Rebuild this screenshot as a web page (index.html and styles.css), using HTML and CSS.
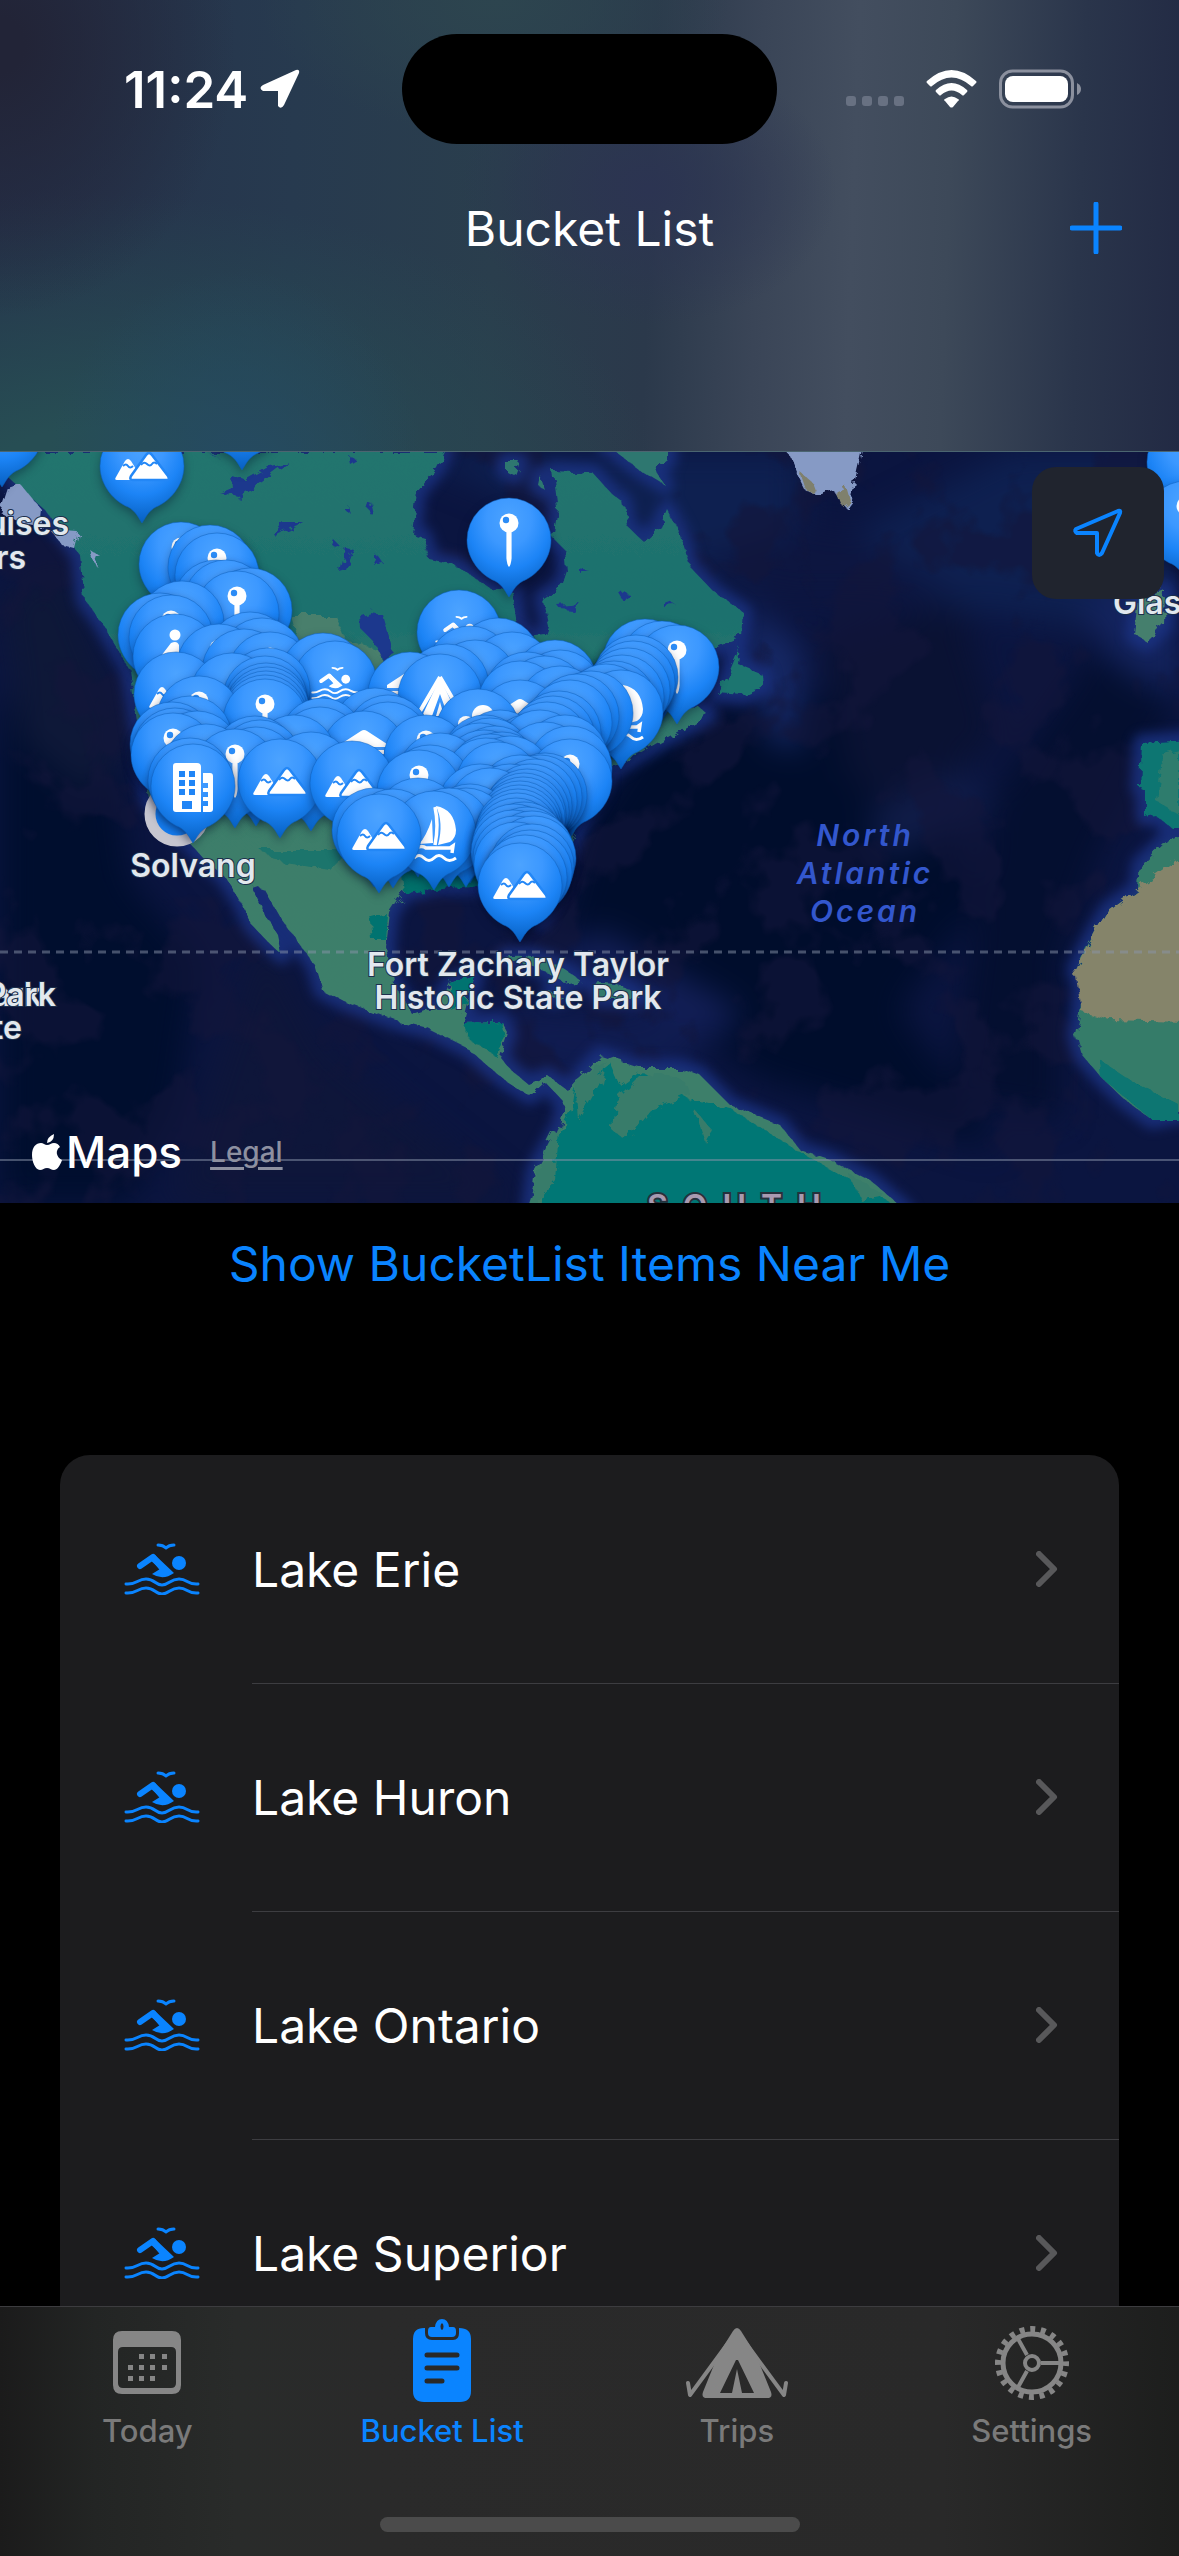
FILE: index.html
```html
<!DOCTYPE html>
<html lang="en">
<head>
    <meta charset="utf-8">
    <title>Bucket List</title>
    <link rel="stylesheet" href="styles.css">
</head>
<body>
    <!-- Shared icons -->
    <svg class="defs" aria-hidden="true">
        <defs>
            <symbol id="swim" viewBox="0 0 76 52">
                <g fill="none" stroke="currentColor" stroke-linecap="round" stroke-linejoin="round">
                    <path d="M34 2C38 2 40 3 42 5C44 3 46 2 50 2" stroke-width="3"/>
                    <path d="M2 41C13 42 13 36 22 36S31 42 38 42S46 36 55 36S63 42 74 41" stroke-width="3"/>
                    <path d="M2 50C13 51 13 45 22 45S31 51 38 51S46 45 55 45S63 51 74 50" stroke-width="3"/>
                    <path d="M16 23L29 14L38 25" stroke-width="6"/>
                </g>
                <path d="M25 16L31 12L50 30Q39 38 28 31L36 26Z" fill="currentColor"/>
                <circle cx="55" cy="20" r="7" fill="currentColor"/>
            </symbol>
        </defs>
    </svg>

    <header class="top">
        <div class="status">
            <div class="status-left">
                <span class="time">11:24</span>
                <svg class="arrow" viewBox="0 0 40 40"><path d="M3 16L36 1Q40 0 39 4L24 36Q21 41 18 37V22H3Q-2 19 3 16Z" fill="#fff"/></svg>
            </div>
            <div class="island"></div>
            <div class="status-right">
                <svg class="dots" viewBox="0 0 58 10" fill="#687182"><rect width="10" height="10" rx="3"/><rect x="16" width="10" height="10" rx="3"/><rect x="32" width="10" height="10" rx="3"/><rect x="48" width="10" height="10" rx="3"/></svg>
                <svg class="wifi" viewBox="0 0 51 38" fill="#fff"><path d="M1 11Q25.500-11 50 11Q51 12 50 13L47 16Q46 17 45 16Q25.500-1 6 16Q5 17 4 16L1 13Q0 12 1 11Z"/><path d="M10 20Q25.500 6 41 20Q42 21 41 22L38 25Q37 26 36 25Q25.500 16 15 25Q14 26 13 25L10 22Q9 21 10 20Z"/><path d="M19 29Q25.500 24 32 29Q34 30 32 31L27 37Q25.500 38 24 37L19 31Q17 30 19 29Z"/></svg>
                <svg class="battery" viewBox="0 0 82 40"><rect x="1.500" y="2" width="72" height="36" rx="12" fill="none" stroke="#8b909e" stroke-width="3"/><rect x="6" y="7" width="63" height="26" rx="8" fill="#fff"/><path d="M78 14Q82 16 82 20T78 26Z" fill="#8b909e"/></svg>
            </div>
        </div>
        <div class="titlebar">
            <h1>Bucket List</h1>
            <button class="add" type="button" aria-label="Add"><svg viewBox="0 0 52 52"><path d="M26 2V50M2 26H50" stroke="#0a84ff" stroke-width="5" stroke-linecap="round"/></svg></button>
        </div>
    </header>

    <main>
        <section class="map">
            <svg class="world" viewBox="0 452 1179 751" preserveAspectRatio="xMidYMid slice">
                <defs>
                    <radialGradient id="blue" cx=".5" cy=".22" r=".76">
                        <stop offset="0" stop-color="#4ca3ff"/>
                        <stop offset=".35" stop-color="#3c98ff"/>
                        <stop offset=".65" stop-color="#1c84f6"/>
                        <stop offset="1" stop-color="#0862c4"/>
                    </radialGradient>
                    <linearGradient id="north" x1="0" y1="452" x2="0" y2="1000" gradientUnits="userSpaceOnUse">
                        <stop offset="0" stop-color="#24746e"/>
                        <stop offset=".3" stop-color="#1c716e"/>
                        <stop offset=".6" stop-color="#3b7d6b"/>
                        <stop offset="1" stop-color="#3e7f6b"/>
                    </linearGradient>
                    <filter id="soft" x="-30%" y="-30%" width="160%" height="160%" color-interpolation-filters="sRGB"><feGaussianBlur stdDeviation="16"/></filter>
                    <filter id="shelf" x="-10%" y="-10%" width="120%" height="120%" color-interpolation-filters="sRGB"><feGaussianBlur stdDeviation="6"/></filter>
                    <filter id="rough"><feTurbulence type="fractalNoise" baseFrequency=".09" numOctaves="3" seed="4"/><feDisplacementMap in="SourceGraphic" scale="12"/></filter>
                    <!-- Faint patches on the sea floor -->
                    <filter id="floor" x="0" y="0" width="100%" height="100%" color-interpolation-filters="sRGB">
                        <feTurbulence type="fractalNoise" baseFrequency=".012" numOctaves="4" seed="9"/>
                        <feColorMatrix values="0 0 0 0 .075  0 0 0 0 .085  0 0 0 0 .23  9 0 0 0 -4.600"/>
                    </filter>
                    <filter id="drop" x="-30%" y="-20%" width="160%" height="150%" color-interpolation-filters="sRGB"><feDropShadow dx="0" dy="4" stdDeviation="5" flood-color="#000a24" flood-opacity=".35"/></filter>
                    <path id="body" d="M0-42A42 42 0 0 1 42 0C42 20 27 36 14 41C6 45 3 53 0 57C-3 53-6 45-14 41C-27 36-42 20-42 0A42 42 0 0 1 0-42Z"/>
                    <g id="g-pin"><circle cy="-17" r="9.500" fill="#fff"/><circle cx="-3" cy="-20" r="3.200" fill="#2c8cf6"/><path d="M-2.600-9H2.600V18Q2 25 0 27Q-2 25-2.600 18Z" fill="#fff"/></g>
                    <g id="g-mountain"><path d="M-26 11L-17-5Q-14-9-11-5L-1 11Q0 14-3 14H-25Q-28 14-26 11Z" fill="#fff"/><path d="M-19 0Q-16-3-14 0T-9 0" fill="none" stroke="#2387f6" stroke-width="2"/><path d="M-11 10L4-11Q7-15 10-11L26 10Q28 14 25 14H-9Q-13 14-11 10Z" fill="#fff" stroke="#2387f6" stroke-width="2.500"/><path d="M-1-1Q2-5 5-2T10-2T15-2" fill="none" stroke="#2387f6" stroke-width="2"/></g>
                    <g id="g-building"><path d="M-17-23H4Q8-23 8-19V26H-17Q-20 26-20 23V-20Q-20-23-17-23Z" fill="#fff"/><path d="M10-13H17Q20-13 20-10V23Q20 26 17 26H10V20H15V15H10V11H15V6H10V2H15V-3H10Z" fill="#fff"/><path d="M-14-15h6v6h-6zM-4-15h6v6h-6zM-14-6h6v6h-6zM-4-6h6v6h-6zM-14 3h6v6h-6zM-4 3h6v6h-6zM-11 15h10v8h-10z" fill="#2085f6"/></g>
                    <g id="g-sail"><path d="M2-27Q20-24 22-3Q22 5 16 9L4 12Q10-10 2-27ZM-2-14L-1 10L-15 11Q-8 4-2-14Z" fill="#fff"/><path d="M1-26Q5-8 1 12M-18 15Q-12 12-8 15H16L19 13L18 20" fill="none" stroke="#fff" stroke-width="3.500"/><path d="M-20 25Q-15 20-10 25T0 25T10 25T22 25" fill="none" stroke="#fff" stroke-width="3"/></g>
                    <g id="g-tent"><path d="M0-19L-24 22M0-19L24 22" stroke="#fff" stroke-width="4"/><path d="M0-18L18 20H8L0-2L-8 20H-18Z" fill="#fff"/><path d="M0 6L4 20H-4Z" fill="#fff"/></g>
                    <g id="g-hut"><path d="M-23-9L-3-22Q0-24 3-22L23-9V-6H-23ZM-20-3H20V1H-20ZM-16 1h5v20h-5zM-3 1h5v20h-5zM11 1h5v20h-5z" fill="#fff"/></g>
                    <g id="g-swim" color="#fff"><use href="#swim" x="-24" y="-17" width="48" height="34"/></g>
                    <g id="g-walk" fill="#fff"><circle cy="-21" r="5.500"/><path d="M-4-13Q2-16 4-11V8H-5V0L-14 6Q-17 4-14 0Z"/></g>
                    <g id="g-tree" fill="#fff"><circle cx="5" cy="-15" r="11"/><circle cx="-12" cy="-7" r="8"/></g>
                </defs>

                <rect y="452" width="1179" height="751" fill="#0b1540"/>
                <!-- Ocean depth -->
                <g filter="url(#soft)">
                    <path d="M0 700L110 720L130 880L200 960L180 1100L130 1203H0Z" fill="#000e2e"/>
                    <path d="M60 560L130 740L90 800L20 740L0 600Z" fill="#0e1838"/>
                    <path d="M590 820L650 730L740 710L860 690L930 700L980 900L900 1010L1000 1150L760 1080L560 940Z" fill="#000d2c"/>
                    <path d="M820 640L960 600L1000 740L900 810L850 780Z" fill="#0a1233"/>
                    <path d="M990 800L1100 640L1179 700L1100 850L1060 960L1060 1120L950 1100Z" fill="#040f30"/>
                    <path d="M400 452H800V560L1010 452H1179V640L900 600L740 590Z" fill="#0e2050"/>
                    <path d="M700 560L830 520L960 600L780 600Z" fill="#0d1640"/>
                    <path d="M870 810L960 770L1000 810L880 860Z" fill="#101c48"/>
                    <path d="M740 600L800 650L800 750L770 740Z" fill="#172a68"/>
                    <path d="M1080 600L1179 580V700L1110 660Z" fill="#14245f"/>
                    <path d="M410 1000L560 1010L700 1020L690 1070L560 1080Z" fill="#101c50"/>
                    <path d="M600 930L740 1010L720 1040L540 960Z" fill="#131f57"/>
                    <path d="M260 920L330 1050L520 1203H170L230 1020Z" fill="#0e163a"/>
                </g>
                <rect y="452" width="1179" height="751" filter="url(#floor)" opacity=".6"/>
                <g opacity=".8" filter="url(#shelf)" stroke="#1b3385" stroke-width="18" stroke-linejoin="round">
                    <use href="#land"/>
                </g>
                <!-- Land -->
                <g filter="url(#rough)">
                    <g id="land">
                        <path d="M0 452H445L437 468L417 492L412 533L423 536L430 560L457 566L490 588L513 592L518 626L527 638L547 636L550 628L543 598L562 586L567 571L565 550L553 538L558 509L553 471L593 473L610 492L623 502L627 526L643 541L660 526L667 509L680 533L690 567L713 591L743 612L741 636L700 655L660 700L700 708L708 715L657 743L610 770L575 830L540 920L510 900L480 885L440 885L403 893L390 913L386 947L393 983L413 1015L438 1007L450 983L475 975L467 1003L462 1023L502 1022L508 1033L500 1057L511 1070L528 1084L548 1076L567 1090L600 1055L615 1060L640 1068L680 1068L700 1075L730 1105L780 1125L800 1150L830 1160L870 1180L905 1210H530L535 1170L560 1125L565 1103L545 1082L530 1096L505 1080L490 1068L470 1050L430 1030L398 1022L345 1002L322 990L315 965L300 945L282 920L265 890L250 885L262 910L278 935L282 955L268 942L252 925L240 900L225 877L205 860L150 800L130 670L100 620L85 600L80 555L45 510L0 470Z" fill="url(#north)"/>
                        <path d="M606 445L640 470L665 485L655 470L668 460V445ZM505 462L520 462L515 475L505 470ZM540 475L545 490L538 485Z" fill="#2d776f"/>
                        <path d="M740 647L738 664L762 674L763 686L743 695L717 693L727 677Z" fill="#1c746f"/>
                        <path d="M505 957Q540 950 580 980L565 984L545 970ZM595 985Q620 980 640 998L600 998ZM550 992L562 996L552 998Z" fill="#33796e"/>
                        <path d="M1142 743L1190 740V828H1172L1155 815L1145 817V790L1140 788Z" fill="#0c7672"/>
                        <path d="M1190 830L1168 838L1140 865L1138 888L1108 910L1095 932L1085 950L1076 970L1082 985L1080 1015L1076 1035L1082 1055L1102 1078L1125 1100L1152 1120L1190 1112Z" fill="#357c69"/>
                        <path d="M1139 600L1165 590L1164 625L1147 642L1135 635Z" fill="#457f6d"/>
                    </g>
                    <path d="M1179 860L1138 888L1108 910L1095 932L1076 970L1082 1012L1110 1020L1190 1022V850Z" fill="#85846b"/>
                    <path d="M785 445L795 470L805 490L818 498L835 492L846 508L852 500L855 480L863 445Z" fill="#869ac5"/>
                    <path d="M800 472L812 482L818 498L806 490ZM836 490L846 486L850 500L842 506Z" fill="#7f806d"/>
                    <path d="M8 488L20 484L42 510L40 528L25 525L0 512ZM50 530L78 532L74 548L62 545ZM88 548L100 556L96 566Z" fill="#869ac5"/>
                    <!-- South American rainforest and coasts -->
                    <path d="M575 1090L610 1062L620 1085L640 1070L690 1100L730 1108L800 1152L905 1210H540L545 1160L572 1110Z" fill="#007774"/>
                    <path d="M640 1075Q690 1070 690 1095L650 1110L625 1140L612 1130L615 1100ZM575 1080L605 1060L600 1080L578 1120ZM545 1150L560 1120L555 1180L535 1203H528ZM695 1110L712 1130L705 1142ZM850 1175L885 1195L860 1200Z" fill="#397c6b"/>
                    <path d="M462 1023L502 1022L505 1038L495 1055L470 1040ZM450 983L475 975L465 1005L450 1010ZM370 920L388 915L386 940L372 940Z" fill="#00736f"/>
                    <path d="M260 850L350 850L330 870L280 862Z" fill="#1a746c"/>
                    <path d="M400 850L500 850L480 885L405 893Z" fill="#00706b"/>
                    <path d="M1100 1060L1130 1080L1179 1105V1120H1152L1102 1078Z" fill="#077672"/>
                    <path d="M1160 755L1179 750V815L1155 800Z" fill="#3e7e6b" opacity=".7"/>
                    <path d="M290 615L335 615L345 640L380 650V680L300 650Z" fill="#487f6c"/>
                    <!-- Lakes -->
                    <path d="M207 452L220 458L212 455ZM231 475L245 480L270 466L290 462L278 470L262 482L240 498L220 493L232 488ZM285 522L303 522L275 536L273 533ZM334 540L342 548L332 545ZM346 548L354 550L346 570L340 572ZM361 615L370 612L382 614L392 650L396 655L382 660L374 642L362 630ZM345 503L350 512L345 510ZM371 502L374 515L368 512ZM377 555L382 562L372 564ZM348 455L357 460L350 464ZM557 605L580 603L572 610L560 609ZM618 592L630 594L624 602ZM662 600L675 604L662 605ZM580 570L590 572L582 575Z" fill="#1e388d"/>
                </g>
                <g stroke-width="2" stroke="#8994aa" opacity=".5">
                    <path d="M0 952H1179" stroke-dasharray="8 6" stroke-width="3"/>
                    <path d="M0 1160H1179"/>
                </g>

                <circle cx="177" cy="814" r="27" fill="#157df0" stroke="#c6c6cf" stroke-width="11"/>
                <g id="pins"></g>

                <g class="label">
                    <text x="69" y="535" text-anchor="end">uises</text>
                    <text x="26" y="569" text-anchor="end">rs</text>
                    <text x="193" y="877" text-anchor="middle">Solvang</text>
                    <text x="518" y="976" text-anchor="middle">Fort Zachary Taylor</text>
                    <text x="518" y="1009" text-anchor="middle">Historic State Park</text>
                    <text x="42" y="1006" text-anchor="end">Park</text>
                    <text x="56" y="1006" text-anchor="end">Park</text>
                    <text x="22" y="1039" text-anchor="end">te</text>
                    <text x="1113" y="614">Glasgow</text>
                </g>
                <g class="ocean" text-anchor="middle">
                    <text x="865" y="846">North</text>
                    <text x="865" y="884">Atlantic</text>
                    <text x="865" y="922">Ocean</text>
                </g>
                <text class="continent" x="647" y="1218">SOUTH</text>
            </svg>
            <button class="locate" type="button" aria-label="My location"><svg viewBox="0 0 52 52"><path d="M4 22L46 4Q49 3 48 6L30 46Q27 50 25 46V26H5Q2 24 4 22Z" fill="none" stroke="#0a84ff" stroke-width="4" stroke-linejoin="round"/></svg></button>
            <div class="credit">
                <svg class="apple" viewBox="0 0 30 38" fill="#fff"><path d="M22 1Q22 9 15 10Q15 4 22 1Z"/><path d="M15 12C18 12 19 10 22 10Q26 10 28 14C23 17 24 24 30 27C28 33 25 37 22 37C19 37 18 35 15 35S11 37 8 37C3 37 0 28 0 22C0 14 4 10 9 10C11 10 13 12 15 12Z"/></svg>
                <span class="maps">Maps</span>
                <a class="legal" href="#">Legal</a>
            </div>
        </section>

        <button class="near" type="button">Show BucketList Items Near Me</button>

        <ul class="list">
            <li><a href="#"><svg class="swim"><use href="#swim"/></svg><span>Lake Erie</span><svg class="chev" viewBox="0 0 22 36"><path d="M3 3L18 18L3 33"/></svg></a></li>
            <li><a href="#"><svg class="swim"><use href="#swim"/></svg><span>Lake Huron</span><svg class="chev" viewBox="0 0 22 36"><path d="M3 3L18 18L3 33"/></svg></a></li>
            <li><a href="#"><svg class="swim"><use href="#swim"/></svg><span>Lake Ontario</span><svg class="chev" viewBox="0 0 22 36"><path d="M3 3L18 18L3 33"/></svg></a></li>
            <li><a href="#"><svg class="swim"><use href="#swim"/></svg><span>Lake Superior</span><svg class="chev" viewBox="0 0 22 36"><path d="M3 3L18 18L3 33"/></svg></a></li>
        </ul>
    </main>

    <nav class="tabs">
        <a href="#">
            <svg viewBox="0 0 110 84" fill="#868686"><path fill-rule="evenodd" d="M30 12H80Q89 12 89 21V66Q89 75 80 75H30Q21 75 21 66V21Q21 12 30 12ZM31 28Q26 28 26 33V64Q26 69 31 69H79Q84 69 84 64V33Q84 28 79 28Z"/><path d="M47 35h5v5h-5zM58 35h5v5h-5zM70 35h5v5h-5zM36 46h5v5h-5zM47 46h5v5h-5zM58 46h5v5h-5zM70 46h5v5h-5zM36 57h5v5h-5zM47 57h5v5h-5zM58 57h5v5h-5z"/></svg>
            <span>Today</span>
        </a>
        <a href="#" class="active">
            <svg viewBox="0 0 110 84" fill="#0a84ff"><path d="M37 9H38V14Q38 21 45 21H66Q72 21 72 14V9Q84 9 84 20V72Q84 83 73 83H37Q26 83 26 72V20Q26 9 37 9Z"/><path fill-rule="evenodd" d="M44 8H48Q49 0 55 0T62 8H66Q69 8 69 12V14Q69 18 65 18H45Q41 18 41 14V12Q41 8 44 8ZM55 4A3 4 0 0 0 55 11A3 4 0 0 0 55 4Z"/><path d="M40 36H70M40 49H70M40 62H55" stroke="#292929" stroke-width="5" stroke-linecap="round"/></svg>
            <span>Bucket List</span>
        </a>
        <a href="#">
            <svg viewBox="0 0 110 84" fill="#868686"><path d="M55 12L8 76L6 64M55 12L102 76L104 64" fill="none" stroke="#868686" stroke-width="4" stroke-linejoin="round" stroke-linecap="round"/><path fill-rule="evenodd" d="M51 12Q55 6 59 12L74 36L89 73Q91 79 85 79H25Q19 79 21 73L36 36ZM54 41L38 74H50L55 50L60 74H72L56 41Z"/></svg>
            <span>Trips</span>
        </a>
        <a href="#">
            <svg viewBox="0 0 110 84" fill="none" stroke="#868686"><circle cx="55" cy="44" r="29" stroke-width="5"/><circle cx="55" cy="44" r="34" stroke-width="6" stroke-dasharray="5 5.680" stroke-dashoffset="2"/><circle cx="55" cy="44" r="7" stroke-width="4"/><path d="M64 44H84M50 36L40 18M50 52L40 70" stroke-width="4"/></svg>
            <span>Settings</span>
        </a>
        <div class="home"></div>
    </nav>

    <script>
        // x, y, glyph (drawn in order, the later ones lie on top)
        const pins = [
            [2,430],[242,413],[142,466,'mountain'],[1189,462],[1186,523,'pin'],[509,540,'pin'],
            [181,564,'pin'],[210,567],[217,575,'pin'],[216,602],[226,602],[250,610],[237,613,'pin'],[182,623],
            [459,632,'swim'],[160,635],[171,637,'pin'],[250,654],[262,660],[175,656,'walk'],[498,660],
            [645,661],[662,663],[677,667,'pin'],[219,666,'pin'],[470,668],[244,671],[270,674,'pin'],[512,674],[323,675],
            [636,677],[633,683],[475,682],[555,682],[335,683,'swim'],[447,686],[268,690],[628,690],[560,692],[410,694,'hut'],
            [527,694],[176,694,'mountain'],[232,695],[440,696,'tent'],[545,698],[622,697],[265,698],[614,703],[520,703],
            [266,705],[267,709],[266,713],[265,717],[606,706],[560,708],[621,712,'sail'],[591,713],[199,718,'pin'],[577,716],
            [265,721,'pin'],[520,722,'hut'],[570,722],[375,730],[478,731,'tree'],[559,733],[553,738],[388,737],[190,738],[322,740],
            [172,744],[388,744],[547,744],[500,752],[175,750],[320,749],[530,756],[540,752],[364,753,'hut'],[197,753],[173,755,'pin'],
            [426,757,'pin'],[485,757],[490,760],[565,757],[294,757],[255,758],[260,762],[480,765],[545,764],[495,768],[570,768],[206,766],
            [256,769],[235,771,'pin'],[484,772],[440,775],[502,774],[490,776],[311,774],[510,778],[486,780],[570,781,'pin'],[190,780],
            [280,781,'mountain'],[352,783,'mountain'],[193,786,'building'],[430,787],[498,784],[419,792,'pin'],[545,795],[540,797],
            [520,797],[535,801],[480,806],[510,806],[530,806],[490,810],[527,811],[524,815],[523,819],[418,820],[470,826],[520,823],
            [519,827],[374,830],[393,831],[466,830],[449,830],[518,831],[434,833,'sail'],[517,835],[516,840],[524,844],[514,846],[527,849],
            [513,852],[532,853],[515,858],[534,858],[516,864],[532,866],[530,872],[525,877],[379,836,'mountain'],[520,885,'mountain']
        ];
        document.getElementById('pins').innerHTML = pins
            .map(([x, y, g]) => `<g transform="translate(${x} ${y})"><use href="#body" class="body"/>${g ? `<use href="#g-${g}"/>` : ''}</g>`)
            .join('');
    </script>
</body>
</html>
```
FILE: styles.css
```css
* { box-sizing: border-box; }

html, body { height: 100%; }

body {
    margin: 0;
    display: flex;
    flex-direction: column;
    background: #000;
    color: #fff;
    font-family: Inter, "Liberation Sans", sans-serif;
    font-size: 48px;
    overflow: hidden;
}

a { color: inherit; text-decoration: none; }

button {
    border: 0;
    padding: 0;
    background: none;
    font: inherit;
    color: #0a84ff;
    cursor: pointer;
}

svg { display: block; }

.defs { position: absolute; width: 0; height: 0; }

/* Header */
.top {
    flex: none;
    padding-bottom: 173px;
    border-bottom: 1px solid #4b6570;
    background:
        radial-gradient(ellipse 20% 60% at 0% 10%, #222437 10%, transparent),
        radial-gradient(ellipse 16% 45% at 20% 105%, #254a62, transparent),
        radial-gradient(ellipse 48% 65% at 8% 108%, #274e54 20%, transparent),
        radial-gradient(ellipse 16% 30% at 55% 42%, #2c3452, transparent),
        radial-gradient(ellipse 20% 30% at 42% 0%, #2d454f, transparent),
        linear-gradient(92deg, #25304a 0%, #273a4f 25%, #2a3e4d 42%, #2b394b 55%, #3a4557 64%, #434e5f 72%, #3d4959 80%, #2a354b 91%, #222a44 100%);
}
.status {
    display: grid;
    grid-template-columns: 1fr 375px 1fr;
    align-items: center;
    height: 178px;
}
.status-left {
    display: flex;
    align-items: center;
    gap: 12px;
    padding-left: 124px;
}
.time { font-size: 51px; font-weight: 600; }
.arrow { width: 40px; height: 40px; }
.island {
    height: 110px;
    border-radius: 55px;
    background: #000;
}
.status-right {
    display: flex;
    justify-content: flex-end;
    align-items: center;
    gap: 22px;
    padding-right: 98px;
}
.dots { width: 58px; height: 10px; margin-top: 24px; }
.wifi { width: 51px; height: 38px; }
.battery { width: 82px; height: 40px; }

.titlebar {
    display: grid;
    grid-template-columns: 1fr auto 1fr;
    align-items: center;
    height: 100px;
    padding: 0 57px;
}
.titlebar h1 {
    grid-column: 2;
    margin: 0;
    font-size: 48px;
    font-weight: 400;
}
.add { justify-self: end; }
.add svg { width: 52px; height: 52px; }

main {
    flex: 1;
    min-height: 0;
    overflow: hidden;
}

/* Map */
.map {
    position: relative;
    aspect-ratio: 1179 / 751;
    overflow: hidden;
}
.world { width: 100%; height: 100%; }
.body {
    fill: url(#blue);
    stroke: #0b5fbe;
    stroke-opacity: .5;
    filter: url(#drop);
}
.label {
    fill: #e2e8ee;
    stroke: #1c2f4c;
    stroke-width: 2px;
    paint-order: stroke;
    font-size: 32px;
    font-weight: 600;
}
.ocean {
    fill: #3357cd;
    font-size: 30px;
    font-weight: 600;
    font-style: italic;
    letter-spacing: 3px;
}
.continent {
    fill: #a89ab0;
    stroke: #26303c;
    stroke-width: 4px;
    paint-order: stroke;
    font-size: 32px;
    font-weight: 600;
    letter-spacing: 15px;
}
.locate {
    position: absolute;
    top: 15px;
    right: 15px;
    width: 132px;
    height: 132px;
    border-radius: 24px;
    background: #20242e;
    display: grid;
    place-items: center;
}
.locate svg { width: 52px; height: 52px; }
.credit {
    position: absolute;
    left: 32px;
    bottom: 24px;
    display: flex;
    align-items: center;
}
.apple { width: 30px; height: 38px; }
.maps {
    padding-left: 4px;
    font-size: 44px;
    font-weight: 500;
}
.legal {
    padding-left: 28px;
    color: #8d90a0;
    font-size: 28px;
    font-weight: 500;
    text-decoration: underline;
    text-decoration-thickness: 3px;
    text-underline-offset: 5px;
}

.near {
    display: block;
    width: 100%;
    height: 120px;
}

/* List */
.list {
    list-style: none;
    margin: 132px 60px 0;
    padding: 0;
    border-radius: 30px;
    background: #1c1c1e;
}
.list a {
    display: flex;
    align-items: center;
    height: 228px;
    padding: 0 61px 0 64px;
    position: relative;
}
.list li + li a::before {
    content: "";
    position: absolute;
    top: 0;
    left: 192px;
    right: 0;
    border-top: 1px solid #3d3d41;
}
.list span { flex: 1; padding-left: 52px; }
.swim { width: 76px; height: 52px; color: #0a84ff; }
.chev {
    width: 22px;
    height: 36px;
    fill: none;
    stroke: #58585a;
    stroke-width: 6;
    stroke-linecap: round;
    stroke-linejoin: round;
}

/* Tab bar */
.tabs {
    flex: none;
    display: grid;
    grid-template-columns: repeat(4, 1fr);
    height: 250px;
    padding: 12px 0 24px;
    border-top: 1px solid #3c3c3f;
    background: linear-gradient(90deg, #1b1b1b 0%, #232524 8%, #292b2a 20%, #2a2a2a 32%, #292929 80%, #1d1e1d 100%);
    color: #7a7a7a;
    font-size: 31px;
    font-weight: 500;
}
.tabs a {
    display: flex;
    flex-direction: column;
    align-items: center;
    gap: 10px;
    line-height: 36px;
}
.tabs a svg { width: 110px; height: 84px; }
.tabs .active { color: #0a84ff; }
.home {
    grid-column: 1 / -1;
    justify-self: center;
    align-self: end;
    width: 420px;
    height: 15px;
    border-radius: 8px;
    background: #4b4b4b;
}
```
